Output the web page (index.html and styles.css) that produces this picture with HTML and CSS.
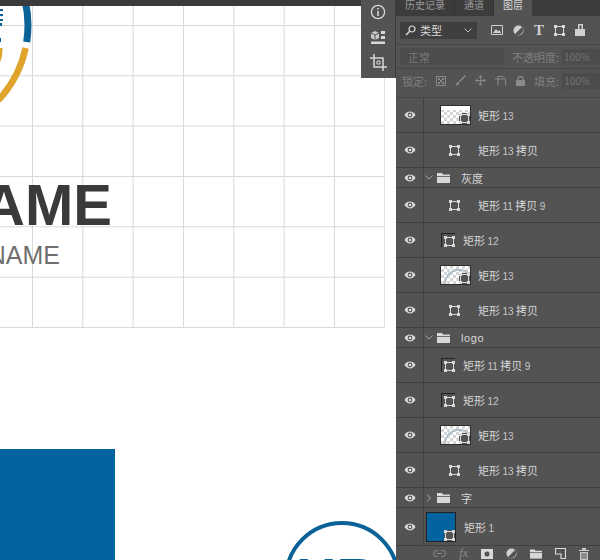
FILE: index.html
```html
<!DOCTYPE html>
<html lang="zh-CN">
<head>
  <meta charset="UTF-8" />
  <title>图层</title>
  <link rel="stylesheet" href="styles.css">
</head>
<body>
  <svg class="defs" width="0" height="0">
    <symbol id="eye" viewBox="0 0 12 8">
      <path d="M0.5 4C2 1.6 4 .6 6 .6S10 1.6 11.5 4C10 6.4 8 7.4 6 7.4S2 6.4 .5 4Z" fill="#dcdcdc"/>
      <circle cx="6" cy="4" r="2.4" fill="#535353"/>
      <circle cx="6" cy="4" r="1.3" fill="#dcdcdc"/>
    </symbol>
    <symbol id="shape" viewBox="0 0 11 11">
      <path d="M1.5 1.5H9.5V9.5H1.5Z" fill="none" stroke="#d8d8d8"/>
      <path d="M0 0H3V3H0ZM8 0H11V3H8ZM0 8H3V11H0ZM8 8H11V11H8Z" fill="#d8d8d8"/>
    </symbol>
    <symbol id="folder" viewBox="0 0 13 10">
      <path d="M0 0H5L6 1.5H13V3H0Z" fill="#d8d8d8"/>
      <path d="M0 3.8H13V10H0Z" fill="#d8d8d8"/>
    </symbol>
  </svg>

  <div class="canvas">
    <div class="grid"></div>

    <svg class="logo-top" width="40" height="105" viewBox="0 0 40 105">
      <path d="M25 0A110 110 0 0 1 26.700 42" fill="none" stroke="#0a6298" stroke-width="7"/>
      <path d="M25.600 48A110 110 0 0 1 -1.500 100" fill="none" stroke="#dfa42c" stroke-width="6.500"/>
      <path d="M0 9H3V11H0ZM0 14H3V16H0ZM0 19H3V21H0ZM0 23H2V26H0ZM0 38H1V42H0Z" fill="#0a6298"/>
      <path d="M0 48H2.500C2.500 54 2 58 0 62Z" fill="#dfa42c"/>
    </svg>

    <div class="topbar"></div>
    <div class="title">NAME</div>
    <div class="subtitle">NAME</div>
    <div class="blue-block"></div>
    <div class="logo-bottom"><span class="logo-letters">HR</span></div>

    <div class="tool-strip">
      <svg width="16" height="16" viewBox="0 0 16 16">
        <circle cx="8" cy="8" r="6.6" fill="none" stroke="#d8d8d8" stroke-width="1.300"/>
        <path d="M7.200 7H8.800V12H7.200ZM7.200 4H8.800V5.600H7.200Z" fill="#d8d8d8"/>
      </svg>
      <svg width="16" height="16" viewBox="0 0 16 16">
        <path d="M1 4L5 2L9 4V9L5 11L1 9Z" fill="#c8c8c8"/>
        <path d="M5 6V11M1 4L5 6L9 4" stroke="#535353" fill="none"/>
        <path d="M11 2H15V5H11ZM11 7H15V10H11ZM1 12.500H15V15H1Z" fill="#d8d8d8"/>
      </svg>
      <svg width="17" height="17" viewBox="0 0 17 17">
        <path d="M4 0V13H17M0 4H13V17" fill="none" stroke="#d8d8d8" stroke-width="1.500"/>
        <path d="M7 7H10V10H7Z" fill="none" stroke="#d8d8d8"/>
      </svg>
    </div>
  </div>

  <div class="panel">
    <div class="tabs">
      <span class="tab">历史记录</span>
      <span class="tab">通道</span>
      <span class="tab active">图层</span>
    </div>

    <div class="filter-row">
      <div class="select">
        <svg width="11" height="11" viewBox="0 0 11 11"><circle cx="7" cy="4" r="3" fill="none" stroke="#d8d8d8" stroke-width="1.200"/><path d="M5 6L1 10" stroke="#d8d8d8" stroke-width="1.500"/></svg>
        <span class="select-text">类型</span>
        <svg class="caret" width="8" height="5" viewBox="0 0 8 5"><path d="M.5 .5L4 4L7.500 .5" fill="none" stroke="#bdbdbd"/></svg>
      </div>
      <div class="filter-icons">
        <svg width="12" height="10" viewBox="0 0 12 10"><path d="M.5 .5H11.500V9.500H.5Z" fill="none" stroke="#d0d0d0"/><path d="M2 8L5 4L7 6.500L8.500 5L10 8Z" fill="#d0d0d0"/></svg>
        <svg width="11" height="11" viewBox="0 0 11 11"><circle cx="5.500" cy="5.500" r="5" fill="#d0d0d0"/><path d="M9 2L2 9A5 5 0 0 0 9 2Z" fill="#535353"/></svg>
        <span class="type-t">T</span>
        <svg width="11" height="11"><use href="#shape"/></svg>
        <svg width="10" height="12" viewBox="0 0 10 12"><path d="M3 0H8V5H10V12H0V5H3Z" fill="#d0d0d0"/><path d="M4.500 1.500H6.500V5H4.500Z" fill="#535353"/></svg>
      </div>
    </div>

    <div class="mode-row">
      <div class="select disabled"><span>正常</span></div>
      <span class="dim-label">不透明度:</span>
      <span class="dim-input">100%</span>
    </div>

    <div class="lock-row">
      <span class="dim-label">锁定:</span>
      <div class="lock-icons">
        <svg width="10" height="10" viewBox="0 0 10 10"><path d="M.5 .5H9.500V9.500H.5Z" fill="none" stroke="#8a8a8a"/><path d="M2 2H4V4H2ZM6 2H8V4H6ZM4 4H6V6H4ZM2 6H4V8H2ZM6 6H8V8H6Z" fill="#8a8a8a"/></svg>
        <svg width="11" height="11" viewBox="0 0 11 11"><path d="M10 0L11 1L5 7L4 6ZM3.500 6.500L4.500 7.500C4 10 2 10.500 0 10.500C1.500 9.500 1.500 7 3.500 6.500Z" fill="#8a8a8a"/></svg>
        <svg width="11" height="11" viewBox="0 0 11 11"><path d="M5.500 0L7.500 2.500H6V5H8.500V3.500L11 5.500L8.500 7.500V6H6V8.500H7.500L5.500 11L3.500 8.500H5V6H2.500V7.500L0 5.500L2.500 3.500V5H5V2.500H3.500Z" fill="#8a8a8a"/></svg>
        <svg width="12" height="10" viewBox="0 0 12 10"><path d="M3 .5H8L10.500 3V9.500M0 3H9.500M3 .5V9.500" fill="none" stroke="#8a8a8a"/></svg>
        <svg width="9" height="10" viewBox="0 0 9 10"><path d="M0 4H9V10H0Z" fill="#8a8a8a"/><path d="M2 4V2.500A2.500 2 0 0 1 7 2.500V4" fill="none" stroke="#8a8a8a" stroke-width="1.300"/></svg>
      </div>
      <span class="dim-label fill-label">填充:</span>
      <span class="dim-input">100%</span>
    </div>

    <div class="layers">
      <div class="layer tall">
        <span class="eye"><svg width="12" height="8"><use href="#eye"/></svg></span>
        <div class="item thumb-item"><span class="thumb checker"><svg class="mask-mark" width="11" height="11"><use href="#shape"/></svg></span><span class="name">矩形 <i>13</i></span></div>
      </div>
      <div class="layer tall">
        <span class="eye"><svg width="12" height="8"><use href="#eye"/></svg></span>
        <div class="item shape-item"><svg width="11" height="11"><use href="#shape"/></svg><span class="name">矩形 <i>13</i> 拷贝</span></div>
      </div>
      <div class="layer group">
        <span class="eye"><svg width="12" height="8"><use href="#eye"/></svg></span>
        <div class="item group-item"><svg class="chev" width="8" height="5" viewBox="0 0 8 5"><path d="M.5 .5L4 4L7.500 .5" fill="none" stroke="#a8a8a8"/></svg><svg width="13" height="10"><use href="#folder"/></svg><span class="name">灰度</span></div>
      </div>
      <div class="layer tall">
        <span class="eye"><svg width="12" height="8"><use href="#eye"/></svg></span>
        <div class="item shape-item"><svg width="11" height="11"><use href="#shape"/></svg><span class="name">矩形 <i>11</i> 拷贝 <i>9</i></span></div>
      </div>
      <div class="layer tall">
        <span class="eye"><svg width="12" height="8"><use href="#eye"/></svg></span>
        <div class="item vector-item"><span class="vector"><svg width="11" height="11"><use href="#shape"/></svg></span><span class="name">矩形 <i>12</i></span></div>
      </div>
      <div class="layer tall">
        <span class="eye"><svg width="12" height="8"><use href="#eye"/></svg></span>
        <div class="item thumb-item"><span class="thumb checker ring"><svg class="mask-mark" width="11" height="11"><use href="#shape"/></svg></span><span class="name">矩形 <i>13</i></span></div>
      </div>
      <div class="layer tall">
        <span class="eye"><svg width="12" height="8"><use href="#eye"/></svg></span>
        <div class="item shape-item"><svg width="11" height="11"><use href="#shape"/></svg><span class="name">矩形 <i>13</i> 拷贝</span></div>
      </div>
      <div class="layer group">
        <span class="eye"><svg width="12" height="8"><use href="#eye"/></svg></span>
        <div class="item group-item"><svg class="chev" width="8" height="5" viewBox="0 0 8 5"><path d="M.5 .5L4 4L7.500 .5" fill="none" stroke="#a8a8a8"/></svg><svg width="13" height="10"><use href="#folder"/></svg><span class="name latin">logo</span></div>
      </div>
      <div class="layer tall">
        <span class="eye"><svg width="12" height="8"><use href="#eye"/></svg></span>
        <div class="item vector-item"><span class="vector"><svg width="11" height="11"><use href="#shape"/></svg></span><span class="name">矩形 <i>11</i> 拷贝 <i>9</i></span></div>
      </div>
      <div class="layer tall">
        <span class="eye"><svg width="12" height="8"><use href="#eye"/></svg></span>
        <div class="item vector-item"><span class="vector"><svg width="11" height="11"><use href="#shape"/></svg></span><span class="name">矩形 <i>12</i></span></div>
      </div>
      <div class="layer tall">
        <span class="eye"><svg width="12" height="8"><use href="#eye"/></svg></span>
        <div class="item thumb-item"><span class="thumb checker ring"><svg class="mask-mark" width="11" height="11"><use href="#shape"/></svg></span><span class="name">矩形 <i>13</i></span></div>
      </div>
      <div class="layer tall">
        <span class="eye"><svg width="12" height="8"><use href="#eye"/></svg></span>
        <div class="item shape-item"><svg width="11" height="11"><use href="#shape"/></svg><span class="name">矩形 <i>13</i> 拷贝</span></div>
      </div>
      <div class="layer group">
        <span class="eye"><svg width="12" height="8"><use href="#eye"/></svg></span>
        <div class="item group-item"><svg class="chev" width="5" height="8" viewBox="0 0 5 8"><path d="M.5 .5L4 4L.5 7.500" fill="none" stroke="#a8a8a8"/></svg><svg width="13" height="10"><use href="#folder"/></svg><span class="name">字</span></div>
      </div>
      <div class="layer bottom">
        <span class="eye"><svg width="12" height="8"><use href="#eye"/></svg></span>
        <div class="item blue-item"><span class="thumb-blue"><svg class="mask-mark" width="11" height="11"><use href="#shape"/></svg></span><span class="name">矩形 <i>1</i></span></div>
      </div>
    </div>

    <div class="panel-footer">
      <svg width="13" height="7" viewBox="0 0 13 7"><path d="M5 .5H3.500A3 3 0 0 0 3.500 6.500H5M8 .5H9.500A3 3 0 0 1 9.500 6.500H8M4 3.500H9" fill="none" stroke="#8a8a8a"/></svg>
      <span class="fx">fx</span>
      <svg width="12" height="10" viewBox="0 0 12 10"><path d="M0 0H12V10H0Z" fill="#d8d8d8"/><circle cx="6" cy="5" r="2.500" fill="#535353"/></svg>
      <svg width="11" height="11" viewBox="0 0 11 11"><circle cx="5.500" cy="5.500" r="5" fill="#d0d0d0"/><path d="M9 2L2 9A5 5 0 0 0 9 2Z" fill="#535353"/></svg>
      <svg width="12" height="10"><use href="#folder"/></svg>
      <svg width="11" height="11" viewBox="0 0 11 11"><path d="M.5 .5H10.500V10.500H6V6H.5Z" fill="none" stroke="#d8d8d8" stroke-width="1.200"/></svg>
      <svg width="10" height="12" viewBox="0 0 10 12"><path d="M0 2H10V3H0ZM3 0H7V2H3ZM1 4H9V12H1Z" fill="#c8c8c8"/><path d="M3 5V11M5 5V11M7 5V11" stroke="#535353"/></svg>
    </div>
  </div>
</body>
</html>
```

FILE: styles.css
```css
html, body { margin: 0; height: 100%; overflow: hidden; }
body { display: flex; width: 600px; height: 560px; font-family: "Noto Sans CJK SC", "Liberation Sans", sans-serif; background: #535353; }
.defs { position: absolute; }
svg { display: block; flex: none; }

/* artboard */
.canvas { position: relative; flex: 0 0 396px; height: 560px; background: #fff; overflow: hidden; }
.topbar { position: absolute; left: 0; top: 0; width: 100%; height: 6px; background: #3b3b3b; }
.grid {
  position: absolute; left: 0; top: 6px; width: 385px; height: 322px;
  background-image: linear-gradient(to right, #d8d8d8 1px, transparent 1px), linear-gradient(to bottom, #d8d8d8 1px, transparent 1px);
  background-size: 50.33px 50.33px;
  background-position: 32px 19px;
}
.logo-top { position: absolute; left: 0; top: 0; }
.title { position: absolute; right: 284px; top: 172px; font: bold 58px/66px "Liberation Sans", sans-serif; color: #3a3a3a; }
.subtitle { position: absolute; right: 336px; top: 241px; font: 25px/29px "Liberation Sans", sans-serif; color: #6f6f6f; }
.blue-block { position: absolute; left: 0; top: 449px; width: 115px; height: 111px; background: #02649e; }
.logo-bottom { position: absolute; left: 284px; top: 521px; width: 116px; height: 116px; box-sizing: border-box; border: 4px solid #0a6298; border-radius: 50%; }
.logo-letters { position: absolute; left: 8px; top: 21px; font: bold 56px/64px "Liberation Sans", sans-serif; color: #0a6298; white-space: nowrap; }
.tool-strip { position: absolute; left: 361px; top: 0; width: 34px; height: 74px; background: #535353; border-right: 1px solid #3b3b3b; display: flex; flex-direction: column; align-items: center; gap: 9px; padding-top: 4px; }

/* layers panel */
.panel { flex: 0 0 204px; height: 560px; display: flex; flex-direction: column; color: #d8d8d8; font-size: 11px; overflow: hidden; }
.tabs { height: 16px; flex: none; display: flex; background: #3c3c3c; overflow: hidden; }
.tab { padding: 0 9px; height: 16px; line-height: 9px; font-size: 10px; color: #9a9a9a; border-right: 1px solid #333; }
.tab.active { background: #535353; color: #d8d8d8; border-right: 0; }

.filter-row { height: 29px; flex: none; display: flex; align-items: center; padding-left: 4px; border-bottom: 1px solid #454545; box-sizing: border-box; }
.select { width: 77px; height: 17px; background: #3f3f3f; display: flex; align-items: center; padding: 0 5px; box-sizing: border-box; gap: 4px; }
.select-text { font-size: 11px; line-height: 17px; }
.caret { margin-left: auto; }
.filter-icons { display: flex; align-items: center; gap: 10px; margin-left: 14px; }
.type-t { font: bold 15px/13px "Liberation Serif", serif; color: #d0d0d0; }

.mode-row { height: 24px; flex: none; display: flex; align-items: center; padding-left: 4px; border-bottom: 1px solid #454545; box-sizing: border-box; }
.select.disabled { width: 104px; background: #4c4c4c; color: #7a7a7a; padding-left: 8px; }
.dim-label { color: #7f7f7f; font-size: 11px; white-space: nowrap; }
.mode-row .dim-label { margin-left: 8px; }
.dim-input { width: 36px; height: 16px; margin-left: 3px; background: #4c4c4c; color: #737373; font-size: 10px; line-height: 16px; padding-left: 2px; flex: none; }

.lock-row { height: 23px; flex: none; display: flex; align-items: center; padding-left: 6px; box-sizing: border-box; }
.lock-icons { display: flex; align-items: center; gap: 9px; margin-left: 9px; }
.fill-label { margin-left: 9px; }

.layers { margin-top: 5px; flex: none; border-top: 1px solid #454545; }
.layer { display: flex; align-items: stretch; border-bottom: 1px solid #404040; box-sizing: border-box; }
.layer.tall { height: 35px; }
.layer.group { height: 20px; }
.layer.bottom { height: 37px; border-bottom: 0; }
.eye { width: 27px; flex: none; display: flex; align-items: center; justify-content: center; border-right: 1px solid #404040; }
.item { display: flex; align-items: center; flex: 1; }
.name { font-size: 11px; color: #d8d8d8; white-space: nowrap; }
.name i { font: normal 10px "Liberation Sans", sans-serif; color: #c8c8c8; }
.name.latin { font: 10px "Liberation Sans", sans-serif; letter-spacing: .6px; }

.shape-item { padding-left: 25px; }
.shape-item .name { margin-left: 18px; }
.thumb-item { padding-left: 17px; }
.thumb-item .name { margin-left: 8px; }
.thumb { position: relative; width: 29px; height: 18px; box-sizing: border-box; background-color: #fff; background-image: linear-gradient(#fff 4px, transparent 4px), conic-gradient(#d6d6d6 25%, #fff 0 50%, #d6d6d6 0 75%, #fff 0); background-size: auto, 6px 6px; box-shadow: 0 0 0 1px #2e2e2e; }
.thumb.ring { background-image: radial-gradient(circle at 18px 18px, transparent 13px, #b4c2cc 13px 15px, transparent 15px), conic-gradient(#d6d6d6 25%, #fff 0 50%, #d6d6d6 0 75%, #fff 0); background-size: auto, 6px 6px; }
.mask-mark { position: absolute; right: 0; bottom: 0; background: #535353; }
.vector-item { padding-left: 17px; }
.vector-item .name { margin-left: 8px; }
.vector { width: 14px; height: 14px; display: flex; align-items: flex-end; justify-content: flex-end; border-left: 1px solid #222; border-top: 1px solid #222; box-sizing: border-box; }
.group-item { padding-left: 1px; }
.group-item .chev { width: 8px; margin-right: 4px; }
.group-item .name { margin-left: 11px; font-size: 11px; }
.blue-item { padding-left: 3px; }
.blue-item .name { margin-left: 9px; }
.thumb-blue { position: relative; width: 28px; height: 28px; background: #02649e; box-shadow: 0 0 0 1px #222; }

.panel-footer { flex: 1; display: flex; align-items: center; justify-content: flex-end; gap: 13px; padding-right: 11px; border-top: 1px solid #404040; }
.fx { font: italic 12px "Liberation Serif", serif; color: #8a8a8a; }
```
